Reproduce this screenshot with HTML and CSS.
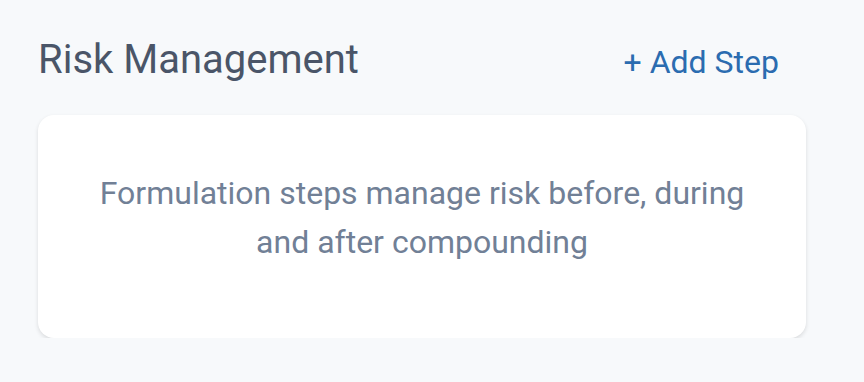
FILE: index.html
```html
<!DOCTYPE html>
<html lang="en">
<head>
<meta charset="UTF-8">
<meta name="viewport" content="width=device-width, initial-scale=1.0">
<title>Risk Management</title>
<link rel="stylesheet" href="styles.css">
</head>
<body>

<div class="panel">
<div class="panel-header">
<h2>Risk Management</h2>
<button class="add-btn">+ Add Step</button>
</div>

<div class="card">
<p>Formulation steps manage risk before, during and after compounding</p>
</div>
</div>

</body>
</html>
```

FILE: styles.css
```css
body {
font-family: Roboto, "Liberation Sans", Arial, sans-serif;
margin: 0;
background-color: #f7f9fb;
}
.panel {
width: 768px;
padding: 36px 0 0 38px;
}
.panel-header {
display: flex;
justify-content: space-between;
align-items: baseline;
height: 48px;
margin-bottom: 31px;
}
.panel-header h2 {
margin: 0;
font-size: 40px;
font-weight: 400;
line-height: 48px;
color: #4a5568;
}
.add-btn {
background: none;
border: none;
padding: 0 27px 0 0;
font-family: inherit;
font-size: 32px;
line-height: 48px;
color: #2b6cb0;
cursor: pointer;
}
.card {
background: #fff;
border-radius: 16px;
box-shadow: 0 2px 4px rgba(0, 0, 0, 0.12);
height: 223px;
box-sizing: border-box;
padding: 54px 60px 0;
}
.card p {
margin: 0;
text-align: center;
font-size: 32px;
line-height: 49px;
color: #718096;
}
```
